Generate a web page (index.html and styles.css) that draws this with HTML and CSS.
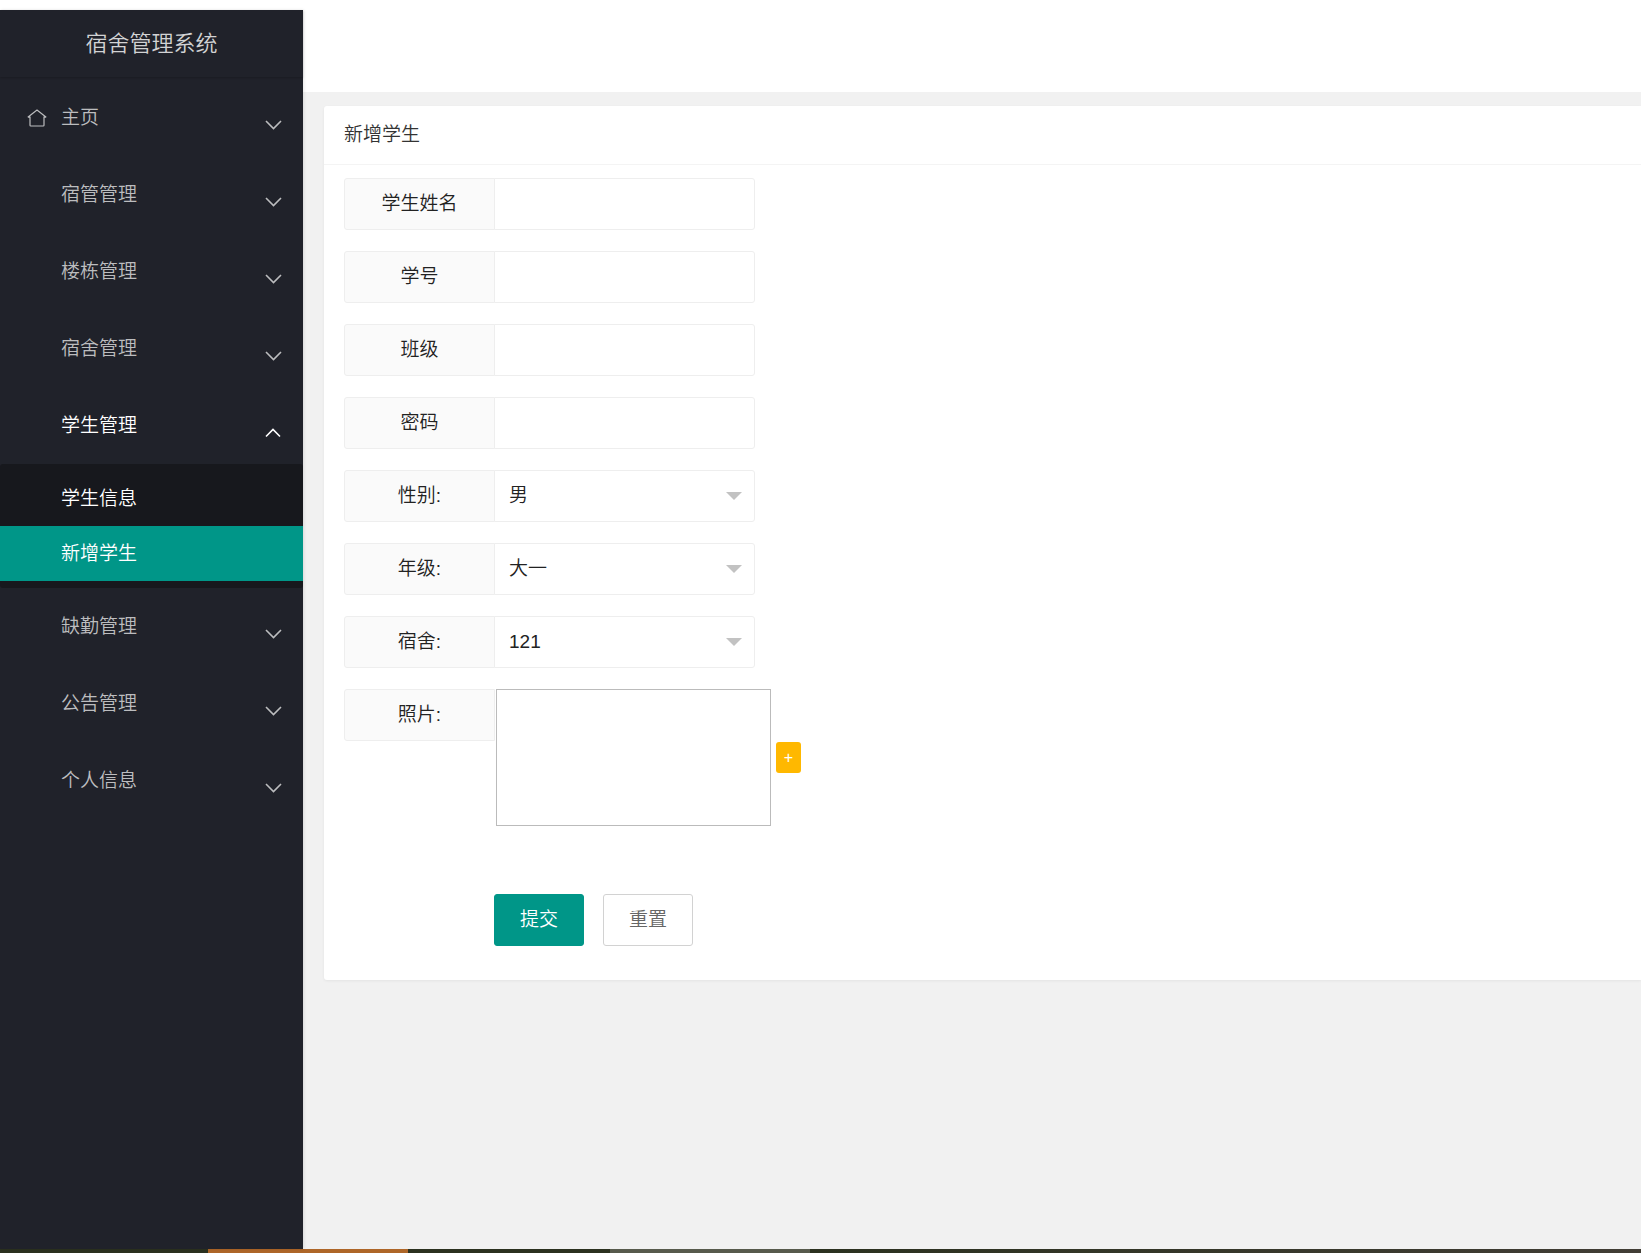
FILE: index.html
```html
<!DOCTYPE html>
<html lang="zh-CN">
<head>
<meta charset="utf-8">
<title>宿舍管理系统</title>
<link rel="stylesheet" href="styles.css">
</head>
<body>
<svg class="defs" aria-hidden="true">
  <symbol id="down" viewBox="0 0 17 10"><path d="M1 1l7.5 7.5L16 1" fill="none" stroke="currentColor" stroke-width="1.6"/></symbol>
  <symbol id="up" viewBox="0 0 17 10"><path d="M1 8.500l7-7L15 8.500" fill="none" stroke="currentColor" stroke-width="1.600"/></symbol>
</svg>
<div class="app">
  <aside class="side">
    <div class="logo">宿舍管理系统</div>
    <nav>
      <ul class="menu">
        <li><a class="item" href="#"><svg class="home" viewBox="0 0 20 18"><path d="M.8 8.2L10 1l9.200 7.200M.8 8.200H3V16.200Q3 17 3.800 17H16.200Q17 17 17 16.200V8.200H19.200" fill="none" stroke="currentColor" stroke-width="1.200"/></svg><span>主页</span><svg class="arrow"><use href="#down"/></svg></a></li>
        <li><a class="item" href="#"><span>宿管管理</span><svg class="arrow"><use href="#down"/></svg></a></li>
        <li><a class="item" href="#"><span>楼栋管理</span><svg class="arrow"><use href="#down"/></svg></a></li>
        <li><a class="item" href="#"><span>宿舍管理</span><svg class="arrow"><use href="#down"/></svg></a></li>
        <li>
          <a class="item open" href="#"><span>学生管理</span><svg class="arrow"><use href="#up"/></svg></a>
          <ul class="submenu">
            <li><a href="#">学生信息</a></li>
            <li><a class="current" href="#">新增学生</a></li>
          </ul>
        </li>
        <li><a class="item" href="#"><span>缺勤管理</span><svg class="arrow"><use href="#down"/></svg></a></li>
        <li><a class="item" href="#"><span>公告管理</span><svg class="arrow"><use href="#down"/></svg></a></li>
        <li><a class="item" href="#"><span>个人信息</span><svg class="arrow"><use href="#down"/></svg></a></li>
      </ul>
    </nav>
  </aside>
  <div class="content">
    <header class="topbar"></header>
    <main class="main">
      <section class="card">
        <h1 class="card-title">新增学生</h1>
        <form class="form">
          <div class="row"><label class="label" for="name">学生姓名</label><input class="field" id="name" type="text"></div>
          <div class="row"><label class="label" for="number">学号</label><input class="field" id="number" type="text"></div>
          <div class="row"><label class="label" for="class">班级</label><input class="field" id="class" type="text"></div>
          <div class="row"><label class="label" for="password">密码</label><input class="field" id="password" type="password"></div>
          <div class="row"><label class="label" for="sex">性别:</label><div class="select"><select class="field" id="sex"><option>男</option><option>女</option></select></div></div>
          <div class="row"><label class="label" for="grade">年级:</label><div class="select"><select class="field" id="grade"><option>大一</option><option>大二</option><option>大三</option><option>大四</option></select></div></div>
          <div class="row"><label class="label" for="dorm">宿舍:</label><div class="select"><select class="field" id="dorm"><option>121</option></select></div></div>
          <div class="row"><label class="label" for="photo">照片:</label><div class="preview"></div><button class="add" id="photo" type="button">+</button></div>
          <div class="actions"><button class="btn primary" type="submit">提交</button><button class="btn" type="reset">重置</button></div>
        </form>
      </section>
    </main>
  </div>
</div>
<footer class="strip"><span class="active"></span><span class="idle"></span></footer>
</body>
</html>
```

FILE: styles.css
```css
* { box-sizing: border-box; }

body {
  display: flex;
  flex-direction: column;
  min-height: 100vh;
  margin: 0;
  padding-top: 10px;
  background: #fff;
  color: #222;
  font: 350 19px/26px "Liberation Sans", "Noto Sans CJK SC", sans-serif;
}

ul { margin: 0; padding: 0; list-style: none; }
a { color: inherit; text-decoration: none; }
.defs { display: none; }

.app { display: flex; flex: 1; }

/* Sidebar */
.side {
  flex: none;
  width: 303px;
  background: #20222a;
  color: #bcbdbf;
  box-shadow: 1px 0 3px rgba(0, 0, 0, .1);
  z-index: 1;
}

.logo {
  height: 67px;
  font-size: 22px;
  line-height: 67px;
  text-align: center;
  color: #d2d3d4;
  box-shadow: 0 1px 2px rgba(0, 0, 0, .2);
}

.menu { padding-top: 2px; }

.item {
  display: flex;
  align-items: center;
  position: relative;
  height: 77px;
  padding: 0 21px 0 61px;
}

.item.open { color: #fff; }

.home {
  position: absolute;
  left: 27px;
  width: 20px;
  height: 18px;
}

.arrow {
  width: 17px;
  height: 10px;
  margin: 15px 0 0 auto;
}

.submenu {
  padding: 7px 0;
  border-radius: 3px;
  background: #17181d;
  color: #fff;
}

.submenu a {
  display: block;
  padding-left: 61px;
  line-height: 55px;
}

.submenu .current { background: #009688; }

/* Content */
.content {
  display: flex;
  flex: 1;
  flex-direction: column;
  min-width: 0;
  background: #f1f1f1;
}

.topbar {
  height: 82px;
  background: #fff;
}

.main { padding: 14px 0 14px 21px; }

.card {
  border-radius: 3px 0 0 3px;
  background: #fff;
  box-shadow: 0 1px 3px rgba(0, 0, 0, .06);
}

.card-title {
  margin: 0;
  padding: 0 20px;
  border-bottom: 1px solid #f4f4f4;
  font-size: 19px;
  font-weight: 350;
  line-height: 58px;
  color: #333;
}

.form {
  display: flex;
  flex-direction: column;
  gap: 21px;
  padding: 13px 20px 34px;
}

.row { display: flex; }

.label {
  width: 151px;
  height: 52px;
  border: 1px solid #eee;
  border-radius: 3px 0 0 3px;
  background: #fafafa;
  line-height: 50px;
  text-align: center;
}

.field {
  width: 261px;
  height: 52px;
  margin: 0 0 0 -1px;
  padding: 0 14px;
  border: 1px solid #eee;
  border-radius: 0 3px 3px 0;
  background: #fff;
  color: inherit;
  font: inherit;
  appearance: none;
}

.select { position: relative; }

.select::after {
  content: "";
  position: absolute;
  top: 22px;
  right: 13px;
  border: 8px solid transparent;
  border-top-color: #c2c2c2;
  pointer-events: none;
}

.preview {
  width: 275px;
  height: 137px;
  margin-left: 1px;
  border: 1px solid #bbb;
}

.add {
  align-self: center;
  width: 25px;
  height: 31px;
  margin-left: 5px;
  padding: 0;
  border: 0;
  border-radius: 3px;
  background: #ffb800;
  color: #fff;
  font: 400 16px/31px "Liberation Sans", sans-serif;
}

.actions {
  display: flex;
  gap: 19px;
  padding: 47px 0 0 150px;
}

.btn {
  width: 90px;
  height: 52px;
  padding: 0;
  border: 1px solid #d2d2d2;
  border-radius: 3px;
  background: #fff;
  color: #666;
  font: inherit;
}

.btn.primary {
  border-color: #009688;
  background: #009688;
  color: #fff;
}

/* Bottom strip */
.strip {
  display: flex;
  gap: 202px;
  height: 4px;
  padding-left: 208px;
  background: linear-gradient(to right, #2b311f 50%, #413d35);
}

.strip span { width: 200px; }
.strip .active { background: #ae6628; }
.strip .idle { background: #575a4c; }
```
